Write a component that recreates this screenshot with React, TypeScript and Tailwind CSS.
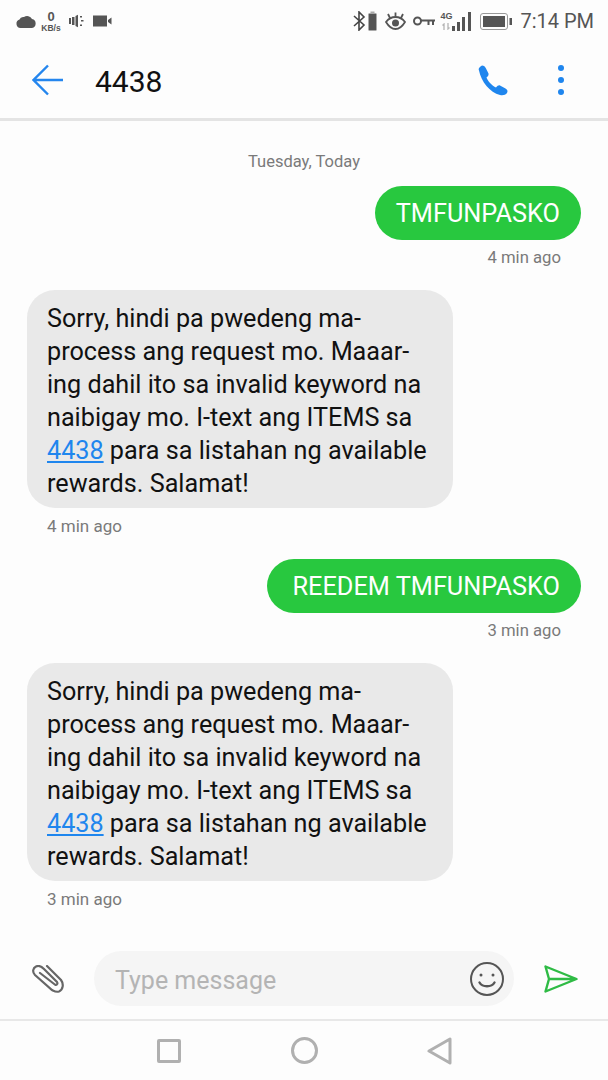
import { Fragment } from 'react';

const INCOMING = [
  'Sorry, hindi pa pwedeng ma-',
  'process ang request mo. Maaar-',
  'ing dahil ito sa invalid keyword na',
  'naibigay mo. I-text ang ITEMS sa',
];

const StatusBar = () => (
  <div className="flex h-[42px] shrink-0 items-center justify-between pl-4 pr-[14px] text-[#555]">
    <div className="flex items-center">
      <svg width="21" height="16" viewBox="0 0 21 16" fill="#555">
        <path d="M4.500 15A4.300 4.300 0 0 1 3.500 6.600 4 4 0 0 1 8 4a5.500 5.500 0 0 1 8 2 4.600 4.600 0 0 1 0 9z" />
      </svg>
      <div className="ml-[4px] flex w-5 flex-col items-center font-['Liberation_Sans',sans-serif] font-bold">
        <span className="text-[13px] leading-[14px]">0</span>
        <span className="text-[8.500px] leading-[9px]">KB/s</span>
      </div>
      <svg className="ml-[8px]" width="15" height="14" viewBox="0 0 15 14" fill="#555">
        <path d="M0 4h2v6H0zM3 3h2.500v8H3zM6.500 2 9 .8v12.400L6.500 12z" />
        <path d="M11 2h2v1.500h-2zM12 6h2.500v1.500h-2.500zM11 10.500h2V12h-2z" />
      </svg>
      <svg className="ml-[9px]" width="19" height="12" viewBox="0 0 19 12" fill="#555">
        <path d="M0 .5h14v11H0zM15 5l3.500-2.500v7L15 7z" />
      </svg>
    </div>
    <div className="flex items-center">
      <svg width="25" height="20" viewBox="0 0 25 20" fill="none">
        <path d="M1 5l10 9-5 5V1l5 5L1 15" stroke="#444" strokeWidth="1.600" />
        <rect x="15.500" y="2.500" width="8" height="17" rx="1" fill="#555" stroke="#aaa" />
        <rect x="17.500" y="0.500" width="4" height="2" fill="#aaa" />
      </svg>
      <svg className="ml-[7px]" width="21" height="18" viewBox="0 0 21 18" fill="none" stroke="#555" strokeWidth="1.800">
        <path d="M1 10c3-4 6-5 9.500-5S17 6 20 10c-3 5-6 7-9.500 7S4 15 1 10z" />
        <circle cx="10.500" cy="11" r="3.500" fill="#555" stroke="none" />
        <path d="M3 2l2 4M10.500.5V4M18 2l-2 4" />
      </svg>
      <svg className="ml-[7px]" width="22" height="10" viewBox="0 0 22 10" fill="none" stroke="#555" strokeWidth="2">
        <circle cx="4.500" cy="5" r="3.500" />
        <path d="M8 4.500h14M15.500 4.500V9M20 4.500V9" />
      </svg>
      <div className="ml-[6px] flex w-[10px] flex-col items-center gap-[2px]">
        <span className="font-['Liberation_Sans',sans-serif] text-[9px] leading-[9px] font-bold">4G</span>
        <svg width="8" height="7" viewBox="0 0 8 7" fill="none" stroke="#b5b5b5" strokeWidth="1.300">
          <path d="M2 7V1L.5 2.500M6 0v6l1.500-1.500" />
        </svg>
      </div>
      <svg width="20" height="19" viewBox="0 0 20 19" fill="#555">
        <rect x="1" y="14" width="3" height="5" />
        <rect x="6" y="10" width="3" height="9" />
        <rect x="11" y="5" width="3" height="14" />
        <rect x="17" y="0" width="3" height="19" />
      </svg>
      <svg className="ml-[9px]" width="32" height="17" viewBox="0 0 32 17" fill="none">
        <rect x="0.500" y="0.500" width="27" height="16" rx="2.500" stroke="#999" />
        <rect x="3" y="3" width="22" height="11" fill="#555" />
        <rect x="29.500" y="5" width="2.500" height="7" fill="#555" />
      </svg>
      <span className="ml-[8px] font-['Roboto',sans-serif] text-[20px] leading-none">7:14 PM</span>
    </div>
  </div>
);

const Header = () => (
  <div className="flex h-[79px] shrink-0 items-center border-b-[3px] border-[#e4e4e4] pl-8 pr-[44px]">
    <svg width="32" height="32" viewBox="0 0 32 32" fill="none" stroke="#2486ee" strokeWidth="2.400">
      <path d="M1 16h30M16 1.500 1.500 16 16 30.500" />
    </svg>
    <h1 className="ml-[31px] pt-[3px] font-['Roboto',sans-serif] text-[30px] leading-none text-[#111]">4438</h1>
    <div className="ml-auto flex items-center gap-[50px]">
      <svg width="30" height="31" viewBox="0 0 30 30" fill="#1f86ee">
        <path d="M1 5C0 3 2 1 4 0c2 0 3 1 4 3l2.500 5c.5 2-1 3-2 4 1.500 4 5.500 8 9.500 10 1.500-1.500 2.500-2.500 4-2l5.500 3c2 1 2.500 3 1.500 4.500-1.500 2-4 2.500-7 2C12 27 3 16 1 5z" />
      </svg>
      <div className="flex flex-col gap-[6px]">
        <span className="size-[6px] rounded-full bg-[#1f86ee]" />
        <span className="size-[6px] rounded-full bg-[#1f86ee]" />
        <span className="size-[6px] rounded-full bg-[#1f86ee]" />
      </div>
    </div>
  </div>
);

const Outgoing = ({ text, time, pl }: { text: string; time: string; pl: string }) => (
  <div className="flex flex-col items-end pr-[27px]">
    <div className={`flex h-[54px] items-center rounded-[27px] bg-[#28c83f] pr-[21px] pt-[2px] text-[25.300px] leading-none whitespace-nowrap text-white ${pl}`}>
      {text}
    </div>
    <span className="mt-[8px] pr-5 text-[16.700px] leading-[20px] text-[#7a7a7a]">{time}</span>
  </div>
);

const Incoming = ({ time }: { time: string }) => (
  <div className="flex flex-col items-start pl-[27px]">
    <div className="h-[218px] w-[426px] rounded-[28px] bg-[#e9e9e9] pl-5 pt-[12px] text-[25.200px] leading-[33px] whitespace-nowrap text-[#111]">
      {INCOMING.map((line) => (
        <Fragment key={line}>
          {line}
          <br />
        </Fragment>
      ))}
      <span className="text-[#1f86ee] underline underline-offset-2">4438</span> para sa listahan ng available
      <br />
      rewards. Salamat!
    </div>
    <span className="mt-2 pl-5 text-[17px] leading-[20px] text-[#7a7a7a]">{time}</span>
  </div>
);

const Composer = () => (
  <div className="flex h-[77px] shrink-0 items-center border-b-2 border-[#e8e8e8] pb-[6px]">
    <svg className="ml-[32px]" width="32" height="28" viewBox="0 0 32 28" fill="none" stroke="#666" strokeWidth="2.200" strokeLinecap="round">
      <path d="M15 1l14 14c3 4 2 10-2 11.500-3 1-5-.5-7-1.500L3 10C0 7 1 3 4 1.500 7 0 10 2 12 4l13 13c1 1.500 0 3-1.500 3L8 8" />
    </svg>
    <div className="ml-[30px] flex h-[55px] w-[420px] items-center justify-between rounded-[28px] bg-[#f5f5f5] pl-[21px] pr-[10px]">
      <span className="pt-[3px] text-[25px] leading-none text-[#b4b4b4]">Type message</span>
      <svg width="34" height="34" viewBox="0 0 34 34" fill="none" stroke="#555" strokeWidth="2">
        <circle cx="17" cy="17" r="16" />
        <circle cx="11" cy="13" r="1.500" fill="#555" stroke="none" />
        <circle cx="23" cy="13" r="1.500" fill="#555" stroke="none" />
        <path d="M9.500 20.500c3 5 12 5 15 0" strokeLinecap="round" strokeWidth="2.400" />
      </svg>
    </div>
    <svg className="ml-[30px]" width="34" height="28" viewBox="0 0 34 28" fill="none" stroke="#2fbb45" strokeWidth="2.400" strokeLinejoin="round">
      <path d="M1.500 1.500l31 12.500-31 12.500L5 14zM5 14h27" />
    </svg>
  </div>
);

const NavBar = () => (
  <div className="flex h-[59px] shrink-0 items-center pl-[157px]">
    <span className="size-[24px] rounded-[2px] border-[3px] border-[#b0b0b0]" />
    <span className="ml-[110px] size-[27px] rounded-full border-[3px] border-[#b0b0b0]" />
    <svg className="ml-[109px]" width="25" height="28" viewBox="0 0 25 28" fill="none" stroke="#b0b0b0" strokeWidth="3" strokeLinejoin="round">
      <path d="M23 2v24L2 14z" />
    </svg>
  </div>
);

export default function App() {
  return (
    <div className="flex h-[1080px] w-[608px] flex-col overflow-hidden bg-[#fdfdfd] font-['Roboto',sans-serif]">
      <StatusBar />
      <Header />
      <main className="flex flex-1 flex-col pt-[31px]">
        <p className="text-center text-[16.500px] leading-[20px] text-[#7a7a7a]">Tuesday, Today</p>
        <div className="mt-[14px]">
          <Outgoing text="TMFUNPASKO" time="4 min ago" pl="pl-[21px]" />
        </div>
        <div className="mt-[22px]">
          <Incoming time="4 min ago" />
        </div>
        <div className="mt-[23px]">
          <Outgoing text="REEDEM TMFUNPASKO" time="3 min ago" pl="pl-[26px]" />
        </div>
        <div className="mt-[22px]">
          <Incoming time="3 min ago" />
        </div>
      </main>
      <Composer />
      <NavBar />
    </div>
  );
}
